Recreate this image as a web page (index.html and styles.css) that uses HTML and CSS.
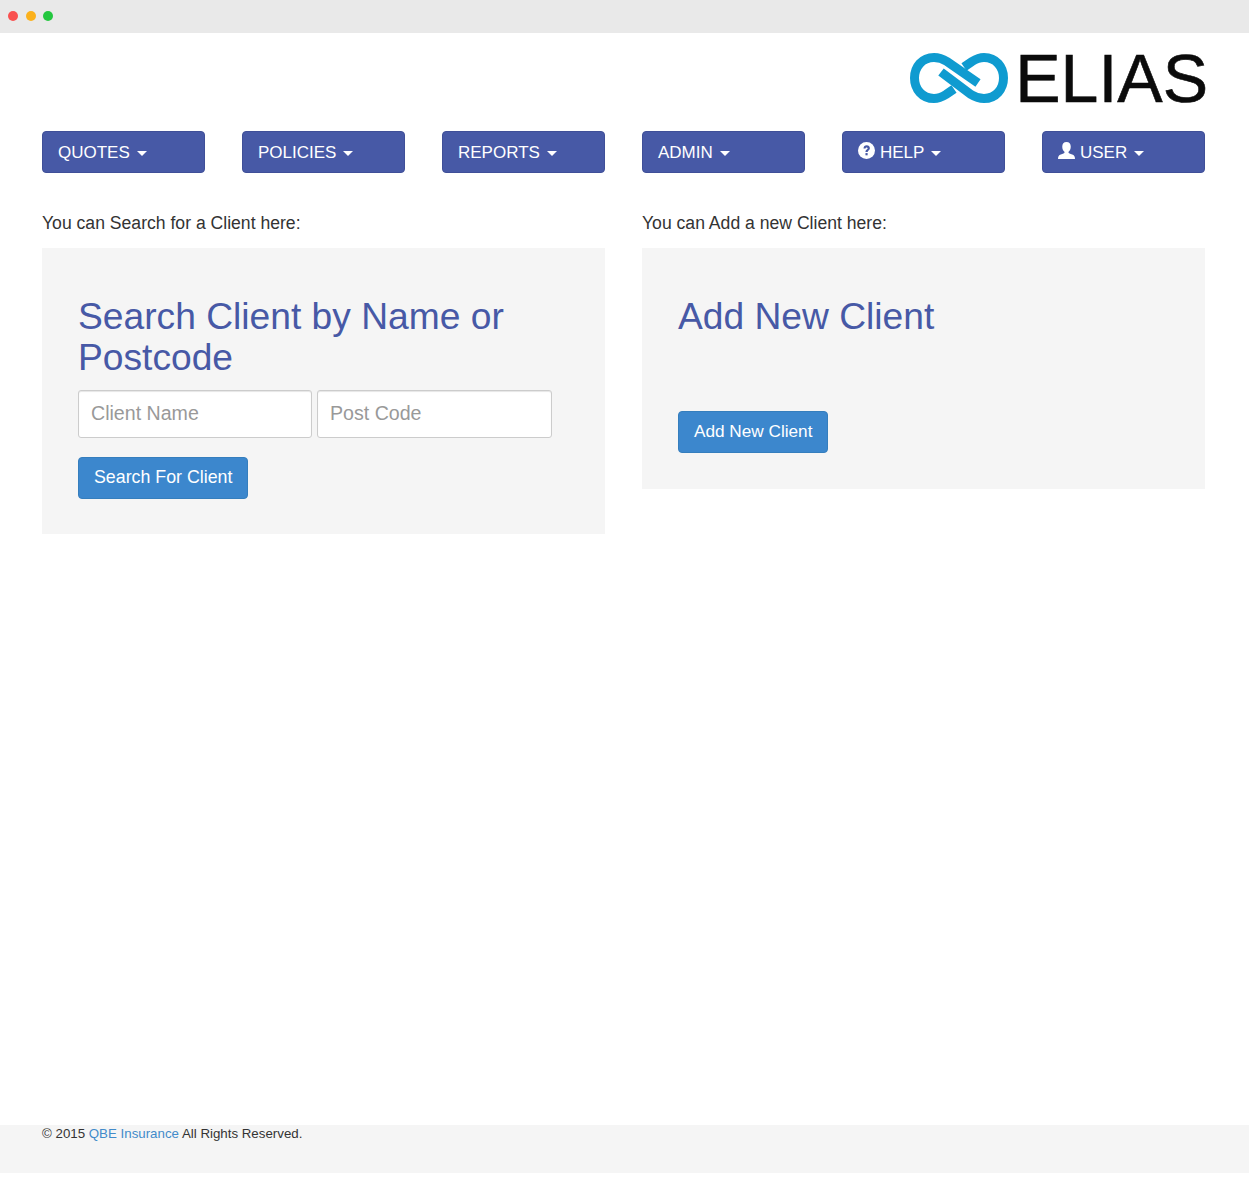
FILE: index.html

```html
<!DOCTYPE html>
<html lang="en">
<head>
<meta charset="UTF-8">
<meta name="viewport" content="width=device-width, initial-scale=1.0">
<title>Elias</title>
<link rel="stylesheet" href="styles.css">
</head>
<body>

<div class="titlebar">
    <span class="dot dot-red"></span>
    <span class="dot dot-yellow"></span>
    <span class="dot dot-green"></span>
</div>

<div class="page">
    <header class="brand">
        <svg class="brand-mark" viewBox="0 0 98 50" width="98" height="50" aria-hidden="true">
            <path d="M44 36 L36 41.500 C32 44 28 45.500 24 45.500 C12 45.500 4.500 36 4.500 25 C4.500 14 12 4.500 24 4.500 C29 4.500 33 6 37 8.500 L68 30" fill="none" stroke="#0f9bd0" stroke-width="9"/>
            <path d="M54 14 L62 8.500 C66 6 70 4.500 74 4.500 C86 4.500 93.500 14 93.500 25 C93.500 36 86 45.500 74 45.500 C69 45.500 65 44 61 41.500 L31 19" fill="none" stroke="#0f9bd0" stroke-width="9"/>
        </svg>
        <span class="brand-name">ELIAS</span>
    </header>

    <nav class="menu">
        <button class="menu-btn">QUOTES <span class="caret"></span></button>
        <button class="menu-btn">POLICIES <span class="caret"></span></button>
        <button class="menu-btn">REPORTS <span class="caret"></span></button>
        <button class="menu-btn">ADMIN <span class="caret"></span></button>
        <button class="menu-btn">
            <svg class="menu-icon" viewBox="0 0 18 18" width="18" height="18" aria-hidden="true">
                <circle cx="9" cy="9" r="9" fill="#fff"/>
                <path d="M5.800 7 C5.800 4.800 7.300 3.500 9.200 3.500 C11.200 3.500 12.600 4.700 12.600 6.500 C12.600 8.700 10.200 8.800 10.200 10.700 L7.900 10.700 C7.900 8 10.200 8 10.200 6.700 C10.200 6.100 9.800 5.700 9.100 5.700 C8.400 5.700 8 6.200 8 7 Z" fill="#4759a6"/>
                <rect x="7.900" y="11.700" width="2.300" height="2.400" fill="#4759a6"/>
            </svg>HELP <span class="caret"></span>
        </button>
        <button class="menu-btn">
            <svg class="menu-icon" viewBox="0 0 18 18" width="18" height="18" aria-hidden="true">
                <path d="M9 0 C12 0 13.500 2.200 13.500 5 C13.500 7.500 12.300 9.500 11 10.500 C11 12 13 12.500 15 13.300 C17 14 18 15 18 18 L0 18 C0 15 1 14 3 13.300 C5 12.500 7 12 7 10.500 C5.700 9.500 4.500 7.500 4.500 5 C4.500 2.200 6 0 9 0 Z" fill="#fff"/>
            </svg>USER <span class="caret"></span>
        </button>
    </nav>

    <main class="columns">
        <section>
            <p class="intro">You can Search for a Client here:</p>
            <div class="panel">
                <h2>Search Client by Name or Postcode</h2>
                <form class="search-fields">
                    <input type="text" placeholder="Client Name">
                    <input type="text" placeholder="Post Code">
                </form>
                <button class="btn-blue btn-search">Search For Client</button>
            </div>
        </section>
        <section>
            <p class="intro">You can Add a new Client here:</p>
            <div class="panel panel-add">
                <h2 class="add-title">Add New Client</h2>
                <button class="btn-blue btn-add">Add New Client</button>
            </div>
        </section>
    </main>
</div>

<footer class="footer">
    <p>&copy; 2015 <a href="#">QBE Insurance</a> All Rights Reserved.</p>
</footer>

</body>
</html>
```

FILE: styles.css

```css
* { box-sizing: border-box; }
body { font-family: 'Liberation Sans', Arial, sans-serif; background-color: #fff; color: #333; margin: 0; padding: 0; min-height: 1177px; display: flex; flex-direction: column; }

.titlebar { height: 33px; background-color: #e9e9e9; display: flex; align-items: center; gap: 7.500px; padding: 0 0 2px 8px; }
.dot { width: 10px; height: 10px; border-radius: 50%; }
.dot-red { background-color: #f9504f; }
.dot-yellow { background-color: #fbb11c; }
.dot-green { background-color: #24c73f; }

.page { padding: 0 44px 0 42px; flex: 1; }

.brand { height: 98px; display: flex; justify-content: flex-end; align-items: flex-start; padding-top: 20px; }
.brand-mark { margin-right: 7px; }
.brand-name { font-size: 68px; line-height: 50px; letter-spacing: 0; color: #0b0b0b; margin-right: -3px; -webkit-text-stroke: 0.600px #0b0b0b; }

.menu { display: grid; grid-template-columns: repeat(6, minmax(0, 1fr)); gap: 37px; }
.menu-btn { height: 42px; background-color: #4759a6; border: 1px solid #3f4f98; border-radius: 4px; color: #fff; font-family: inherit; font-size: 17px; text-align: left; padding: 1px 15px 0; cursor: pointer; white-space: nowrap; }
.menu-icon { width: 17px; height: 17px; margin-right: 5px; vertical-align: -1px; }
.caret { display: inline-block; width: 0; height: 0; border-top: 5px solid #fff; border-left: 5px solid transparent; border-right: 5px solid transparent; margin-left: 2px; vertical-align: 2px; }

.columns { display: grid; grid-template-columns: repeat(2, minmax(0, 1fr)); gap: 37px; margin-top: 39px; align-items: start; }
.intro { font-size: 17.600px; line-height: 22px; margin: 0 0 14px; }
.panel { background-color: #f5f5f5; padding: 48px 36px 35px; }
.panel-add { padding-bottom: 36px; }
.panel h2 { font-size: 37.200px; font-weight: normal; line-height: 41px; color: #4759a6; margin: 0 0 12px; }
.panel .add-title { margin-bottom: 74px; }

.search-fields { display: flex; gap: 5px; margin-bottom: 19px; }
.search-fields input { width: 234px; height: 48px; border: 1px solid #ccc; border-radius: 3px; box-shadow: inset 0 1px 1px rgba(0,0,0,.1); padding: 0 12px 2px; font-family: inherit; font-size: 19.600px; background-color: #fff; }
.search-fields input + input { width: 235px; }
.search-fields input::placeholder { color: #999; opacity: 1; }

.btn-blue { height: 42px; background-color: #3c87cd; border: 1px solid #357ebd; border-radius: 4px; color: #fff; font-family: inherit; padding: 0 15px 1px; cursor: pointer; }
.btn-search { font-size: 17.800px; }
.btn-add { font-size: 17.200px; }

.footer { height: 48px; background-color: #f5f5f5; margin-bottom: 4px; padding-left: 42px; font-size: 13.300px; }
.footer p { margin: 0; line-height: 17px; }
.footer a { color: #428bca; text-decoration: none; }
```
